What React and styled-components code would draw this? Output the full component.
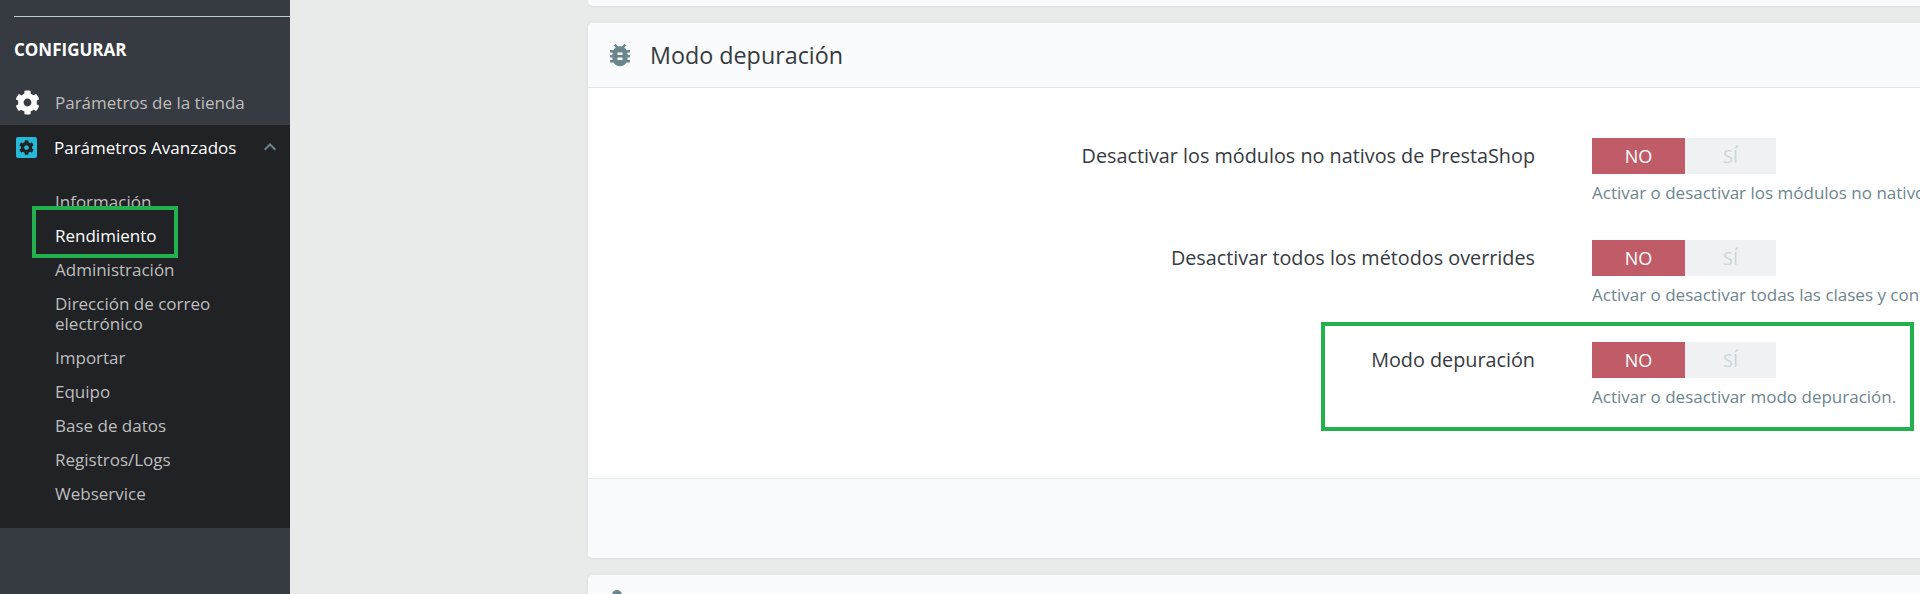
import React from 'react';
import styled, { createGlobalStyle } from 'styled-components';
import { FaCog } from 'react-icons/fa';
import { MdBugReport, MdKeyboardArrowUp } from 'react-icons/md';

const GlobalStyle = createGlobalStyle`
  html, body {
    margin: 0;
    height: 100%;
    overflow: hidden;
    background: #e9ebeb;
    font-family: "Open Sans", "Noto Sans", sans-serif;
  }
  * {
    box-sizing: border-box;
  }
`;

const Page = styled.div`
  position: relative;
  display: flex;
  width: 1920px;
  height: 594px;
  overflow: hidden;
`;

const Sidebar = styled.aside`
  flex: 0 0 290px;
  background: #363a41;
  padding-top: 16px;
`;

const Divider = styled.div`
  height: 1px;
  margin-left: 14px;
  background: #bbcdd2;
`;

const SectionTitle = styled.div`
  padding: 23px 0 0 14px;
  height: 67px;
  font-size: 17px;
  line-height: 20px;
  font-weight: 700;
  color: #fff;
`;

const TopItem = styled.div`
  display: flex;
  align-items: center;
  height: 41px;
  padding: 0 0 4px 15px;
  font-size: 17px;
  color: #bebebe;
  svg {
    flex: none;
    width: 25px;
    height: 25px;
    color: #fff;
    margin-right: 15px;
  }
`;

const OpenGroup = styled.div`
  height: 403px;
  background: #202226;
`;

const GroupHead = styled.div`
  display: flex;
  align-items: center;
  height: 46px;
  padding: 0 8px 2px 16px;
  font-size: 17px;
  color: #fff;
`;

const CubeIcon = styled.span`
  flex: none;
  display: flex;
  align-items: center;
  justify-content: center;
  width: 21px;
  height: 21px;
  margin-right: 17px;
  border-radius: 2px;
  background: #25b9d7;
  color: #202226;
  font-size: 15px;
`;

const Chevron = styled(MdKeyboardArrowUp)`
  flex: none;
  width: 24px;
  height: 24px;
  margin-left: auto;
  color: #6c868e;
`;

const SubList = styled.ul`
  list-style: none;
  margin: 0;
  padding: 14px 40px 0 55px;
`;

const SubItem = styled.li`
  padding: 7px 0;
  font-size: 17px;
  line-height: 20px;
  color: ${p => (p.$active ? '#fff' : '#bebebe')};
`;

const Main = styled.main`
  flex: 1;
  min-width: 0;
  display: flex;
  flex-direction: column;
  gap: 17px;
  padding-left: 298px;
`;

const Card = styled.section`
  flex: none;
  width: 1500px;
  background: #fff;
  border-radius: 5px;
  box-shadow: 0 0 4px 0 rgba(0, 0, 0, 0.06);
`;

const PrevCardEnd = styled(Card)`
  height: 6px;
  background: #fafbfc;
  border-radius: 0 0 5px 5px;
`;

const CardHeader = styled.header`
  display: flex;
  align-items: center;
  height: 65px;
  padding-left: 17px;
  background: #fafbfc;
  border-bottom: 1px solid #dfe7ea;
  border-radius: 5px 5px 0 0;
  font-size: 23.3px;
  color: #363a41;
  svg {
    width: 30px;
    height: 30px;
    color: #6c868e;
    margin-right: 15px;
  }
`;

const CardBody = styled.div`
  display: flex;
  flex-direction: column;
  gap: 30px;
  height: 390px;
  padding-top: 50px;
`;

const Row = styled.div`
  display: grid;
  grid-template-columns: 947px 1fr;
  column-gap: 57px;
  height: 72px;
`;

const RowLabel = styled.div`
  text-align: right;
  font-size: 19.8px;
  line-height: 22px;
  padding-top: 7px;
  color: #363a41;
`;

const Toggle = styled.div`
  display: flex;
  width: 184px;
  height: 36px;
`;

const ToggleOption = styled.div`
  flex: ${p => (p.$on ? '0 0 93px' : '1')};
  display: flex;
  align-items: center;
  justify-content: center;
  font-size: 18px;
  background: ${p => (p.$on ? '#c05c67' : '#eff1f2')};
  color: ${p => (p.$on ? '#fff' : '#c7d6db')};
`;

const Help = styled.div`
  margin-top: 9px;
  font-size: 17px;
  line-height: 19px;
  color: #6c868e;
  white-space: nowrap;
`;

const CardFooter = styled.footer`
  height: 80px;
  background: #fafbfc;
  border-top: 1px solid #e6ecee;
  border-radius: 0 0 5px 5px;
`;

const NextCard = styled(Card)`
  height: 60px;
  background: #fafbfc;
  padding: 15px 0 0 22px;
  svg {
    display: block;
    width: 10px;
    height: 10px;
    margin-left: 2px;
    color: #6c868e;
  }
`;

const Highlight = styled.div`
  position: absolute;
  left: ${p => p.$x}px;
  top: ${p => p.$y}px;
  width: ${p => p.$w}px;
  height: ${p => p.$h}px;
  border: 4px solid #22b14c;
  pointer-events: none;
`;

const subItems = [
  'Información',
  'Rendimiento',
  'Administración',
  'Dirección de correo electrónico',
  'Importar',
  'Equipo',
  'Base de datos',
  'Registros/Logs',
  'Webservice',
];

const rows = [
  {
    label: 'Desactivar los módulos no nativos de PrestaShop',
    help: 'Activar o desactivar los módulos no nativos de PrestaShop.',
  },
  {
    label: 'Desactivar todos los métodos overrides',
    help: 'Activar o desactivar todas las clases y controladores overrides.',
  },
  { label: 'Modo depuración', help: 'Activar o desactivar modo depuración.' },
];

export default function App() {
  return (
    <>
      <GlobalStyle />
      <Page>
        <Sidebar>
          <Divider />
          <SectionTitle>CONFIGURAR</SectionTitle>
          <TopItem>
            <FaCog />
            Parámetros de la tienda
          </TopItem>
          <OpenGroup>
            <GroupHead>
              <CubeIcon>
                <FaCog />
              </CubeIcon>
              Parámetros Avanzados
              <Chevron />
            </GroupHead>
            <SubList>
              {subItems.map(item => (
                <SubItem key={item} $active={item === 'Rendimiento'}>
                  {item}
                </SubItem>
              ))}
            </SubList>
          </OpenGroup>
        </Sidebar>
        <Main>
          <PrevCardEnd />
          <Card>
            <CardHeader>
              <MdBugReport />
              Modo depuración
            </CardHeader>
            <CardBody>
              {rows.map(({ label, help }) => (
                <Row key={label}>
                  <RowLabel>{label}</RowLabel>
                  <div>
                    <Toggle>
                      <ToggleOption $on>NO</ToggleOption>
                      <ToggleOption>SÍ</ToggleOption>
                    </Toggle>
                    <Help>{help}</Help>
                  </div>
                </Row>
              ))}
            </CardBody>
            <CardFooter />
          </Card>
          <NextCard>
            <svg viewBox="0 0 10 10">
              <circle cx="5" cy="5" r="5" fill="currentColor" />
            </svg>
          </NextCard>
        </Main>
        <Highlight $x={32} $y={206} $w={146} $h={52} />
        <Highlight $x={1321} $y={322} $w={593} $h={109} />
      </Page>
    </>
  );
}
